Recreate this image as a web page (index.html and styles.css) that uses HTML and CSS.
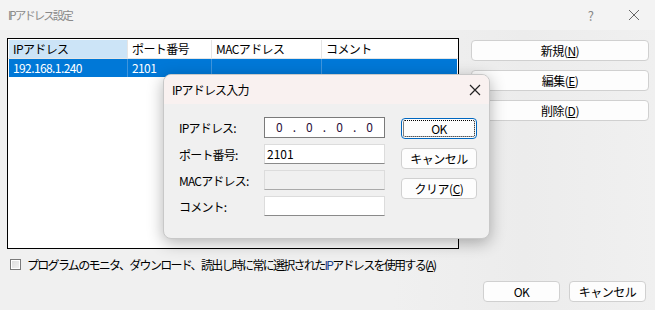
FILE: index.html
```html
<!DOCTYPE html>
<html lang="ja">
<head>
    <meta charset="UTF-8">
    <title>IPアドレス設定</title>
    <link rel="stylesheet" href="styles.css">
</head>
<body>
    <div class="window">
        <div class="titlebar">
            <span class="title">IPアドレス設定</span>
            <span class="help">?</span>
            <span class="close">
                <svg width="12" height="12" viewBox="0 0 12 12"><path d="M1 1L11 11M11 1L1 11" stroke="#666" stroke-width="1"/></svg>
            </span>
        </div>

        <div class="content">
            <div class="list">
                <div class="list-head">
                    <div class="col c1 sorted">IPアドレス</div>
                    <div class="col c2">ポート番号</div>
                    <div class="col c3">MACアドレス</div>
                    <div class="col c4">コメント</div>
                </div>
                <div class="list-row selected">
                    <div class="col c1">192.168.1.240</div>
                    <div class="col c2">2101</div>
                    <div class="col c3"></div>
                    <div class="col c4"></div>
                </div>
            </div>

            <div class="side">
                <button class="btn wide">新規(<u>N</u>)</button>
                <button class="btn wide">編集(<u>E</u>)</button>
                <button class="btn wide">削除(<u>D</u>)</button>
            </div>
        </div>

        <label class="check">
            <span class="box"></span>
            <span class="check-text">プログラムのモニタ、ダウンロード、読出し時に常に選択された<span class="blue">IP</span>アドレスを使用する(<u>A</u>)</span>
        </label>

        <div class="footer">
            <button class="btn foot">OK</button>
            <button class="btn foot">キャンセル</button>
        </div>

        <!-- modal dialog -->
        <div class="dialog">
            <div class="dialog-title">
                <span>IPアドレス入力</span>
                <svg width="12" height="12" viewBox="0 0 12 12"><path d="M1 1L11 11M11 1L1 11" stroke="#222" stroke-width="1.2"/></svg>
            </div>
            <div class="dialog-body">
                <div class="form">
                    <div class="field">
                        <span class="lbl">IPアドレス:</span>
                        <div class="input ip">
                            <span>0</span><span class="dot">.</span><span>0</span><span class="dot">.</span><span>0</span><span class="dot">.</span><span>0</span>
                        </div>
                    </div>
                    <div class="field">
                        <span class="lbl">ポート番号:</span>
                        <div class="input">2101</div>
                    </div>
                    <div class="field">
                        <span class="lbl">MACアドレス:</span>
                        <div class="input disabled"></div>
                    </div>
                    <div class="field">
                        <span class="lbl">コメント:</span>
                        <div class="input"></div>
                    </div>
                </div>
                <div class="dialog-buttons">
                    <button class="btn small focused">OK</button>
                    <button class="btn small">キャンセル</button>
                    <button class="btn small">クリア(<u>C</u>)</button>
                </div>
            </div>
        </div>
    </div>
</body>
</html>
```

FILE: styles.css
```css
/* General */
body {
    margin: 0;
    font-family: 'Noto Sans CJK JP', 'Noto Sans', sans-serif;
    font-size: 12px;
    color: #000;
}

.window {
    position: relative;
    width: 655px;
    height: 310px;
    background: linear-gradient(90deg, #f0f0f0 60%, #ececec 80%, #f0f0f0 100%);
    overflow: hidden;
}

/* Title bar */
.titlebar {
    height: 30px;
    background-color: #f3f3f3;
    display: flex;
    align-items: center;
    padding-left: 8px;
}

.title {
    color: #8a8a8a;
    font-size: 11.5px;
    letter-spacing: -2px;
    flex: 1;
}

.help {
    color: #888;
    font-size: 13px;
    margin-right: 34px;
}

.close {
    display: flex;
    margin-right: 15px;
}

/* Content */
.content {
    display: flex;
    padding: 8px 0 0 7px;
    gap: 12px;
}

.list {
    width: 450px;
    height: 209px;
    border: 1px solid #000;
    background-color: #fff;
}

.list-head,
.list-row {
    display: flex;
    height: 18px;
    line-height: 18px;
}

.list-head {
    margin-top: 1px;
    border-bottom: 1px solid #e5e5e5;
}

.col {
    padding-left: 4px;
    box-sizing: border-box;
    white-space: nowrap;
    overflow: hidden;
    border-right: 1px solid #e5e5e5;
    letter-spacing: -0.6px;
}

.c1 { width: 119px; margin-left: 1px; }
.c2 { width: 84px; }
.c3 { width: 110px; }
.c4 { width: 135px; border-right: none; }

.sorted {
    background-color: #cce4f7;
}

.list-row.selected {
    background-color: #0078d7;
    color: #fff;
    margin: 0 1px;
}

.list-row.selected .col {
    border-right-color: #3f95dd;
}

.list-row.selected .c1 {
    margin-left: 0;
}

/* Buttons */
.btn {
    font-family: inherit;
    font-size: 12px;
    background-color: #fdfdfd;
    border: 1px solid #d0d0d0;
    border-radius: 4px;
    color: #000;
    padding: 0;
    letter-spacing: -0.5px;
}

.btn u {
    text-decoration: underline;
}

.side {
    display: flex;
    flex-direction: column;
    gap: 9px;
    padding-top: 2px;
}

.wide {
    width: 178px;
    height: 21px;
}

/* Checkbox */
.check {
    display: flex;
    align-items: center;
    padding: 7px 0 0 10px;
    gap: 6px;
}

.box {
    width: 9px;
    height: 9px;
    border: 1px solid #7a7a7a;
    background: linear-gradient(135deg, #dcdcdc, #f4f4f4);
    box-shadow: inset 0 0 0 1px #fff;
}

.check-text {
    letter-spacing: -1.7px;
}

.blue {
    color: #1a3e8c;
}

/* Footer */
.footer {
    display: flex;
    justify-content: flex-end;
    gap: 9px;
    padding: 8px 9px 0 0;
}

.foot {
    width: 77px;
    height: 21px;
}

/* Dialog */
.dialog {
    position: absolute;
    left: 163px;
    top: 74px;
    width: 327px;
    height: 165px;
    background-color: #f0f0f0;
    border: 1px solid #c8c8c8;
    border-radius: 8px;
    box-sizing: border-box;
    box-shadow: 0 4px 16px rgba(0, 0, 0, 0.3);
    overflow: hidden;
}

.dialog-title {
    height: 29px;
    background-color: #f9f1f0;
    display: flex;
    align-items: center;
    justify-content: space-between;
    padding: 0 8px 0 8px;
    font-size: 12px;
    letter-spacing: -0.8px;
}

.dialog-body {
    display: flex;
    padding: 13px 0 0 15px;
}

.form {
    display: flex;
    flex-direction: column;
    gap: 6px;
    width: 222px;
}

.field {
    display: flex;
    align-items: center;
    height: 21px;
}

.field + .field {
    height: 20px;
}

.lbl {
    width: 85px;
    letter-spacing: -0.8px;
}

.input {
    width: 121px;
    height: 100%;
    box-sizing: border-box;
    background-color: #fff;
    border: 1px solid #dcdcdc;
    border-bottom-color: #8a8a8a;
    padding-left: 2px;
    line-height: 18px;
}

.input.ip {
    display: flex;
    justify-content: space-around;
    color: #2b0f3a;
    padding: 0 6px;
    border-color: #7a7a7a;
}

.input.disabled {
    background-color: #f0f0f0;
    border-color: #dcdcdc;
    border-bottom-color: #aaa;
}

.dialog-buttons {
    display: flex;
    flex-direction: column;
    gap: 9px;
    padding-top: 1px;
}

.small {
    width: 76px;
    height: 21px;
}

.focused {
    border: 1px solid #0067c0;
    outline: 1px dotted #000;
    outline-offset: -3px;
}
```
